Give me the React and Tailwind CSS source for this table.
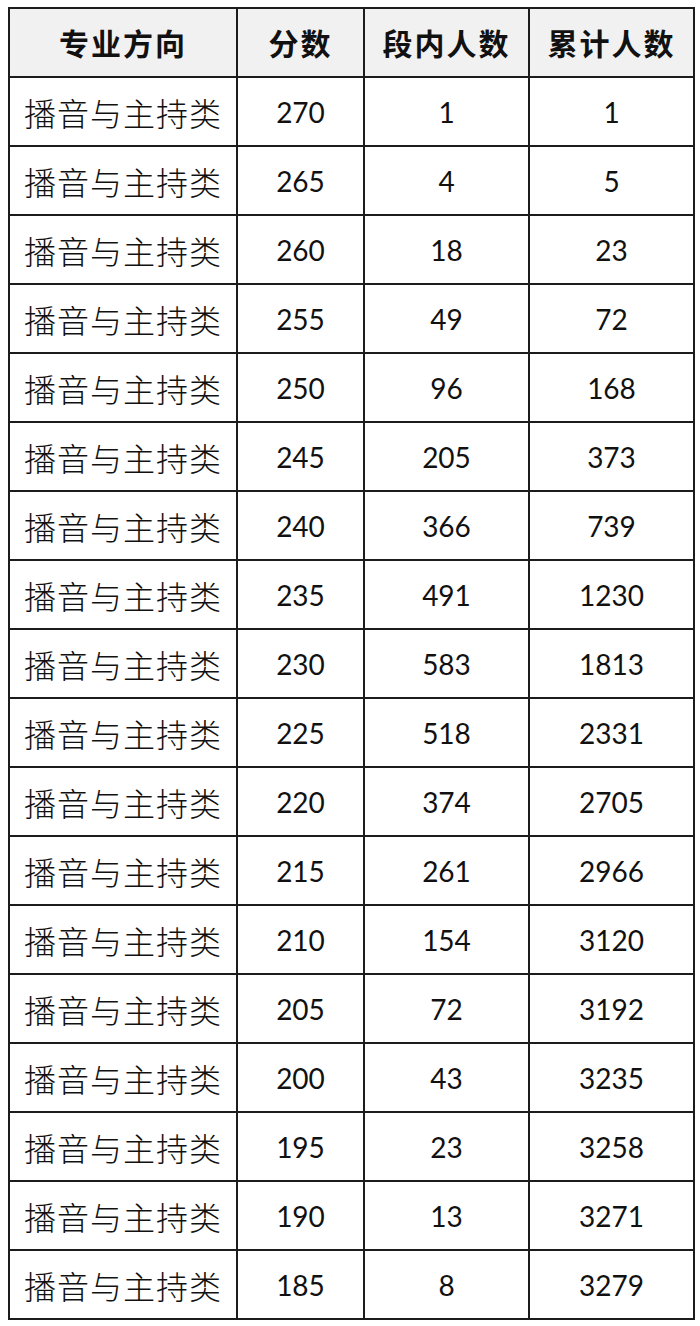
import React from "react";

const rows = [
  [270, 1, 1],
  [265, 4, 5],
  [260, 18, 23],
  [255, 49, 72],
  [250, 96, 168],
  [245, 205, 373],
  [240, 366, 739],
  [235, 491, 1230],
  [230, 583, 1813],
  [225, 518, 2331],
  [220, 374, 2705],
  [215, 261, 2966],
  [210, 154, 3120],
  [205, 72, 3192],
  [200, 43, 3235],
  [195, 23, 3258],
  [190, 13, 3271],
  [185, 8, 3279],
];

const cjk = { fontFamily: '"Noto Sans CJK SC", sans-serif' };
const num = { fontFamily: 'Lato, "Noto Sans CJK SC", sans-serif' };

const App = () => {
  return (
    <div className="w-[700px] h-[1326px] bg-white pt-[7px] pl-[8px]">
      <table className="border-collapse table-fixed w-[685px] text-[#111]">
        <colgroup>
          <col className="w-[228px]" />
          <col className="w-[127px]" />
          <col className="w-[165px]" />
          <col className="w-[165px]" />
        </colgroup>
        <thead>
          <tr className="h-[69px] bg-[#f1f1f1]">
            {["专业方向", "分数", "段内人数", "累计人数"].map((h) => (
              <th
                key={h}
                style={cjk}
                className="border-2 border-[#1c1c1c] text-[30px] font-bold tracking-[2px] text-center p-0"
              >
                {h}
              </th>
            ))}
          </tr>
        </thead>
        <tbody>
          {rows.map(([score, seg, total]) => (
            <tr key={score} className="h-[69px]">
              <td
                style={cjk}
                className="border-2 border-[#1c1c1c] text-[32px] font-light text-center p-0 tracking-[1px]"
              >
                播音与主持类
              </td>
              <td style={num} className="border-2 border-[#1c1c1c] text-[28px] text-center p-0">
                {score}
              </td>
              <td style={num} className="border-2 border-[#1c1c1c] text-[28px] text-center p-0">
                {seg}
              </td>
              <td style={num} className="border-2 border-[#1c1c1c] text-[28px] text-center p-0">
                {total}
              </td>
            </tr>
          ))}
        </tbody>
      </table>
    </div>
  );
};

export default App;
